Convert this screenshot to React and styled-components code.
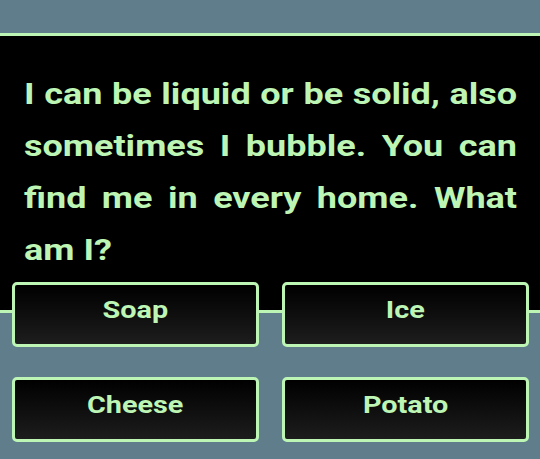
import React from "react";
import styled, { createGlobalStyle } from "styled-components";

const GREEN = "#bdf5b5";
const SLATE = "#607d8b";
const STRETCH = 1.2;

const Global = createGlobalStyle`
  html, body { margin: 0; padding: 0; background: ${SLATE}; }
  body { font-family: Roboto, "Noto Sans", sans-serif; }
`;

const Screen = styled.div`
  width: 540px;
  height: 459px;
  background: ${SLATE};
  padding-top: 33px;
  box-sizing: border-box;
  overflow: hidden;
`;

const Panel = styled.section`
  background: #000;
  border-top: 3px solid ${GREEN};
  border-bottom: 3px solid ${GREEN};
  padding: 32px 23px 34px 24px;
`;

const Question = styled.p`
  margin: 0;
  width: ${493 / STRETCH}px;
  transform: scaleX(${STRETCH});
  transform-origin: left top;
  color: ${GREEN};
  font-family: Roboto, sans-serif;
  font-weight: 700;
  font-size: 30px;
  line-height: 52px;
`;

const Line = styled.span`
  display: block;
  text-align: ${(p) => (p.$last ? "left" : "justify")};
  text-align-last: ${(p) => (p.$last ? "left" : "justify")};
`;

const Answers = styled.div`
  display: grid;
  grid-template-columns: 1fr 1fr;
  grid-auto-rows: 65px;
  column-gap: 23px;
  row-gap: 30px;
  padding: 0 11px 0 12px;
  margin-top: -31px;
  position: relative;
`;

const Answer = styled.button`
  display: flex;
  align-items: center;
  justify-content: center;
  box-sizing: border-box;
  padding: 0 0 9px;
  border: 3px solid ${GREEN};
  border-radius: 5px;
  background: linear-gradient(to bottom, #000 0%, #1d1d1d 100%);
  color: ${GREEN};
  font-family: Roboto, sans-serif;
  font-weight: 700;
  font-size: 24px;
  cursor: pointer;
`;

const Label = styled.span`
  display: inline-block;
  transform: scaleX(${STRETCH});
`;

const lines = [
  "I can be liquid or be solid, also",
  "sometimes I bubble. You can",
  "find me in every home. What",
  "am I?",
];

export default function App() {
  const options = ["Soap", "Ice", "Cheese", "Potato"];
  return (
    <Screen>
      <Global />
      <Panel>
        <Question>
          {lines.map((l, i) => (
            <Line key={i} $last={i === lines.length - 1}>
              {l}
            </Line>
          ))}
        </Question>
      </Panel>
      <Answers>
        {options.map((o) => (
          <Answer key={o}>
            <Label>{o}</Label>
          </Answer>
        ))}
      </Answers>
    </Screen>
  );
}
